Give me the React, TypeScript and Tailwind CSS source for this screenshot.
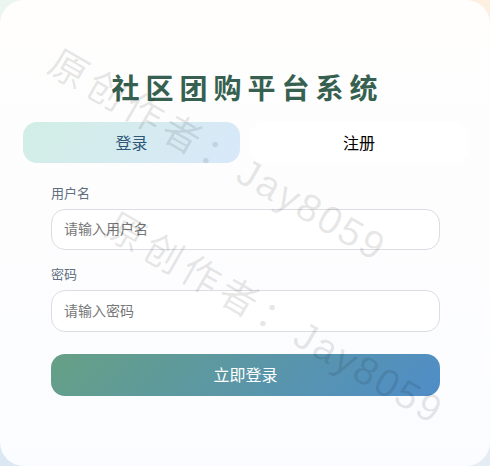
const fontStack = '"Noto Sans CJK SC", "Liberation Sans", sans-serif';

function Watermark({ className }: { className: string }) {
  return (
    <div
      className={`pointer-events-none absolute z-10 flex origin-top-left rotate-[30deg] items-baseline whitespace-nowrap leading-none text-black/10 ${className}`}
    >
      <span className="text-[38px] tracking-[5.5px]">原创作者：</span>
      <span className="text-[39px] tracking-[2.5px]" style={{ fontFamily: '"Liberation Sans", sans-serif' }}>
        Jay8059
      </span>
    </div>
  );
}

function Field({ label, placeholder }: { label: string; placeholder: string }) {
  return (
    <div className="flex flex-col gap-[6px]">
      <label className="text-[13px] leading-[20px] text-[#5f6f80]">{label}</label>
      <input
        placeholder={placeholder}
        className="h-[41.5px] w-full rounded-[14px] border border-[#dcdde3] bg-white px-[12px] pb-[2px] text-[14px] outline-none placeholder:text-[#777]"
      />
    </div>
  );
}

export default function App() {
  return (
    <div
      className="relative h-[466px] w-[490px] overflow-hidden bg-[conic-gradient(from_45deg,#fdf0e0,#e5ecf4,#dbe8f3,#eaf6ee,#fdf0e0)]"
      style={{ fontFamily: fontStack }}
    >
      <div className="h-full w-full rounded-[24px] bg-gradient-to-b from-[#fffefd] to-[#fbfcff] pl-[23px] pr-[22px] pt-[67px]">
        <h1 className="pl-[4px] text-center text-[28px] font-bold leading-[40px] tracking-[6px] text-[#36604f]">
          社区团购平台系统
        </h1>
        <div className="mt-[15px] flex">
          <button className="h-[41px] w-[217px] rounded-[14px] bg-[linear-gradient(135deg,#d2eee5,#d8e8fa)] pb-[2px] text-[16px] text-[#2f5878]">
            登录
          </button>
          <button className="ml-[10px] h-[41px] w-[218px] rounded-[14px] bg-white pb-[2px] text-[16px] text-black">
            注册
          </button>
        </div>
        <div className="mt-[19.5px] flex flex-col gap-[14px] px-[28px]">
          <Field label="用户名" placeholder="请输入用户名" />
          <Field label="密码" placeholder="请输入密码" />
          <button className="mt-[8px] h-[42px] rounded-[14px] bg-[linear-gradient(135deg,#66a085,#4f8dc8)] pb-[2px] text-[16px] text-white">
            立即登录
          </button>
        </div>
      </div>
      <Watermark className="left-[63px] top-[41px]" />
      <Watermark className="left-[120px] top-[204px]" />
    </div>
  );
}
